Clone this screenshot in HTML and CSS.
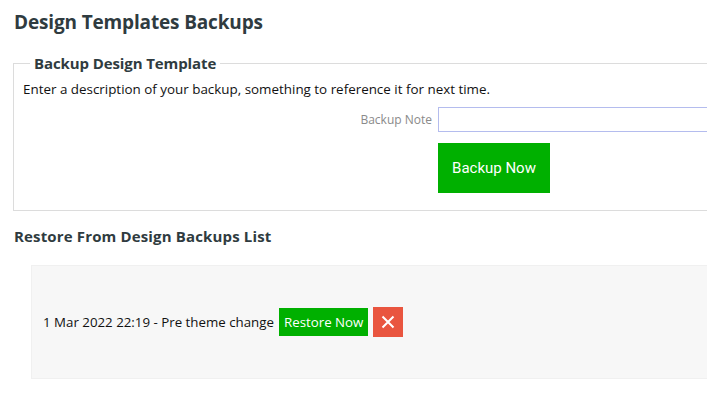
FILE: index.html
```html
<!DOCTYPE html>
<html lang="en">
<head>
  <meta charset="UTF-8" />
  <meta name="viewport" content="width=device-width, initial-scale=1" />
  <title>Design Templates Backups</title>
  <link rel="stylesheet" href="styles.css">
</head>
<body>
  <div class="page">
    <h1>Design Templates Backups</h1>

    <fieldset class="backup-box">
      <legend>Backup Design Template</legend>
      <p class="intro">Enter a description of your backup, something to reference it for next time.</p>
      <div class="form-row">
        <label for="backup-note">Backup Note</label>
        <input type="text" id="backup-note" />
      </div>
      <div class="form-row">
        <span></span>
        <button class="btn-backup">Backup Now</button>
      </div>
    </fieldset>

    <h2>Restore From Design Backups List</h2>

    <div class="backup-list">
      <div class="backup-item">
        <span class="backup-name">1 Mar 2022 22:19 - Pre theme change</span>
        <button class="btn-restore">Restore Now</button>
        <button class="btn-delete" title="Delete">
          <svg viewBox="0 0 14 14"><path d="M1.5 1.5l11 11M12.5 1.5l-11 11"/></svg>
        </button>
      </div>
    </div>
  </div>
</body>
</html>
```

FILE: styles.css
```css
html, body {
  margin: 0;
  padding: 0;
  background: white;
  font-family: 'Open Sans', 'Noto Sans', sans-serif;
  color: #111;
  overflow: hidden;
}
.page {
  width: 780px;
  padding: 0 0 0 13px;
}
h1 {
  margin: 0;
  padding: 9px 0 0 1px;
  font-size: 19px;
  line-height: 26px;
  font-weight: bold;
  letter-spacing: -0.15px;
  color: #2f3b40;
}
.backup-box {
  margin: 18px 0 0 0;
  padding: 0 9px 6px 9px;
  border: 1px solid #dcdcdc;
  min-width: 0;
}
.backup-box legend {
  margin-left: 7px;
  padding: 0 4px;
  font-size: 15px;
  line-height: 20px;
  font-weight: bold;
  letter-spacing: -0.1px;
  color: #2f3b40;
}
.intro {
  margin: 7px 0 9px 0;
  font-size: 13.4px;
  line-height: 18px;
}
.form-row {
  display: grid;
  grid-template-columns: 409px 1fr;
  column-gap: 6px;
  align-items: center;
  margin-bottom: 11px;
}
.form-row label {
  text-align: right;
  font-size: 12px;
  color: #8a8a8a;
}
.form-row input {
  height: 25px;
  box-sizing: border-box;
  border: 1px solid #b4bcee;
  padding: 2px 6px;
  font-size: 13px;
}
.btn-backup {
  justify-self: start;
  width: 112px;
  height: 50px;
  border: none;
  background: #00b000;
  color: white;
  font-family: Roboto, sans-serif;
  font-size: 15px;
  cursor: pointer;
}
h2 {
  margin: 14px 0 0 1px;
  font-size: 15px;
  line-height: 22px;
  font-weight: bold;
  letter-spacing: 0.15px;
  color: #2f3b40;
}
.backup-list {
  margin: 18px 0 0 18px;
  background: #f7f7f7;
  border: 1px solid #f0f0f0;
  height: 112px;
  display: flex;
  align-items: center;
  padding-left: 11px;
}
.backup-item {
  display: flex;
  align-items: center;
  gap: 5px;
  font-size: 13.3px;
}
.btn-restore {
  height: 28px;
  padding: 0 5px;
  border: none;
  background: #00b000;
  color: white;
  font-family: 'Open Sans', sans-serif;
  font-size: 13.3px;
  cursor: pointer;
}
.btn-delete {
  width: 30px;
  height: 30px;
  border: none;
  background: #e9553f;
  padding: 0;
  display: flex;
  align-items: center;
  justify-content: center;
  cursor: pointer;
}
.btn-delete svg {
  width: 14px;
  height: 14px;
  stroke: white;
  stroke-width: 2;
  fill: none;
}
```
